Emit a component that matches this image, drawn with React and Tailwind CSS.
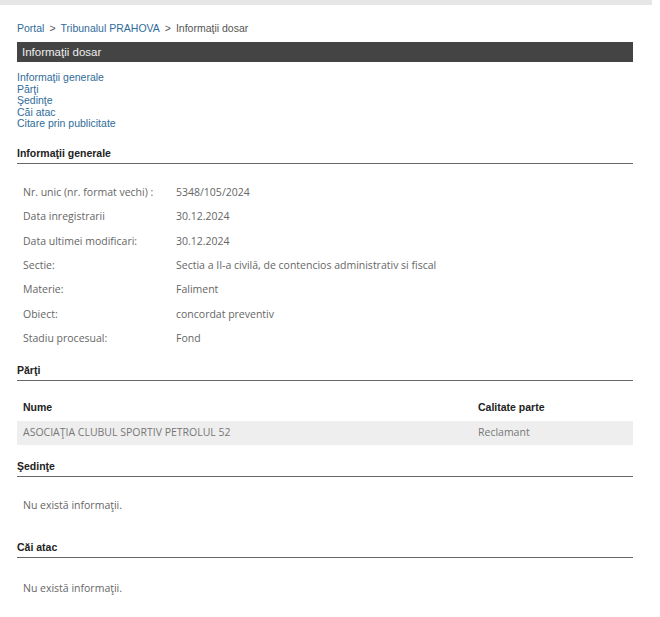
import React from "react";

const details = [
  ["Nr. unic (nr. format vechi) :", "5348/105/2024"],
  ["Data inregistrarii", "30.12.2024"],
  ["Data ultimei modificari:", "30.12.2024"],
  ["Sectie:", "Sectia a II-a civilă, de contencios administrativ si fiscal"],
  ["Materie:", "Faliment"],
  ["Obiect:", "concordat preventiv"],
  ["Stadiu procesual:", "Fond"],
];

const links = ["Informaţii generale", "Părţi", "Şedinţe", "Căi atac", "Citare prin publicitate"];

const SectionTitle = ({ children, className = "" }) => (
  <div
    className={`border-b border-[#666] pb-[3px] text-[10.5px] leading-[13px] font-bold text-[#222] font-['Liberation_Sans',Arial,sans-serif] ${className}`}
  >
    {children}
  </div>
);

const App = () => {
  return (
    <div className="min-h-[617px] w-[660px] bg-white">
      {/* top strip */}
      <div className="h-[5px] w-[652px] bg-[#e6e6e6]" />

      <div className="w-[633px] pl-[17px]">
        {/* breadcrumb */}
        <div className="mt-[17px] mb-[7px] text-[10.5px] leading-[13px] font-['Liberation_Sans',Arial,sans-serif] text-[#555]">
          <a className="text-[#2f6c99]">Portal</a>
          <span className="mx-[5px]">&gt;</span>
          <a className="text-[#2f6c99]">Tribunalul PRAHOVA</a>
          <span className="mx-[5px]">&gt;</span>
          <span>Informaţii dosar</span>
        </div>

        <div className="h-[20px] bg-[#444] pl-[5px] text-[11.5px] leading-[20px] text-[#eee] font-['Liberation_Sans',Arial,sans-serif]">
          Informaţii dosar
        </div>

        {/* anchors */}
        <div className="mt-[10px] flex flex-col text-[10.5px] leading-[11.5px] text-[#2f6c99] font-['Liberation_Sans',Arial,sans-serif]">
          {links.map((l) => (
            <a key={l}>{l}</a>
          ))}
        </div>

        <SectionTitle className="mt-[17px]">Informaţii generale</SectionTitle>

        <div className="mt-[17px] font-['Open_Sans',sans-serif] text-[10.5px] text-[#666]">
          {details.map(([k, v]) => (
            <div key={k} className="flex h-[24.4px] items-center pl-[6px]">
              <div className="w-[153px]">{k}</div>
              <div>{v}</div>
            </div>
          ))}
        </div>

        <SectionTitle className="mt-[13px]">Părţi</SectionTitle>

        <div className="mt-[20px] flex pl-[6px] text-[10.5px] leading-[13px] font-bold text-[#222] font-['Liberation_Sans',Arial,sans-serif]">
          <div className="w-[455px]">Nume</div>
          <div>Calitate parte</div>
        </div>
        <div className="mt-[7px] flex h-[24px] items-center bg-[#eee] pl-[6px] font-['Open_Sans',sans-serif] text-[10.5px] text-[#777]">
          <div className="w-[455px]">ASOCIAŢIA CLUBUL SPORTIV PETROLUL 52</div>
          <div>Reclamant</div>
        </div>

        <SectionTitle className="mt-[15px]">Şedinţe</SectionTitle>
        <div className="mt-[22px] pl-[6px] font-['Open_Sans',sans-serif] text-[10.5px] leading-[13px] text-[#666]">
          Nu există informaţii.
        </div>

        <SectionTitle className="mt-[29px]">Căi atac</SectionTitle>
        <div className="mt-[24px] pl-[6px] font-['Open_Sans',sans-serif] text-[10.5px] leading-[13px] text-[#666]">
          Nu există informaţii.
        </div>
      </div>
    </div>
  );
};

export default App;
